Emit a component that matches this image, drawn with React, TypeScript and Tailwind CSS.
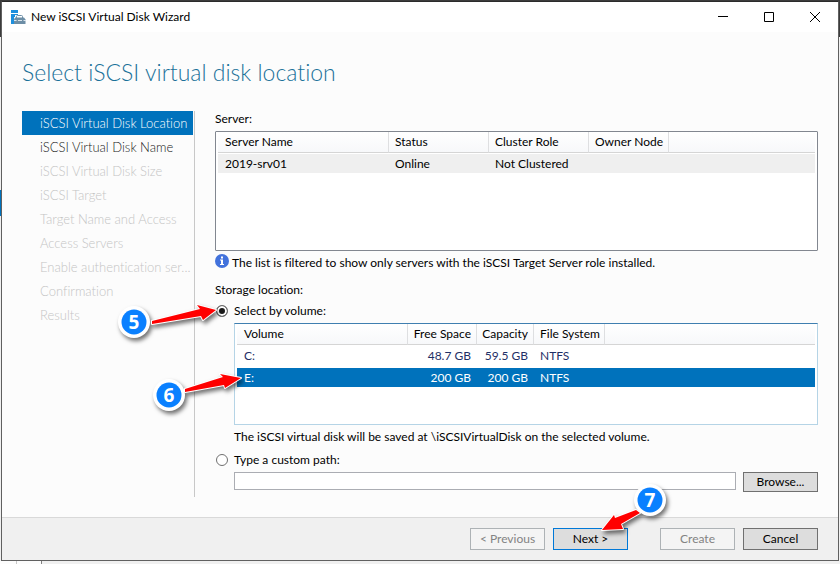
import type { ReactNode } from "react";

const steps = [
  "iSCSI Virtual Disk Location",
  "iSCSI Virtual Disk Name",
  "iSCSI Virtual Disk Size",
  "iSCSI Target",
  "Target Name and Access",
  "Access Servers",
  "Enable authentication ser...",
  "Confirmation",
  "Results",
];

function stepClass(i: number) {
  if (i === 0) return "bg-[#0072bc] text-white";
  if (i === 1) return "text-[#222222]";
  return "text-[#c4c4c4]";
}

/* Numbered marker with an arrow; its origin is the arrow's tip. */
function Callout({ n, cx, cy, points, className }: { n: number; cx: number; cy: number; points: string; className: string }) {
  return (
    <svg className={`pointer-events-none absolute z-10 size-px overflow-visible ${className}`} aria-hidden="true">
      <g className="drop-shadow-[2px_3px_2px_rgba(0,0,0,0.55)]">
        <polygon points={points} fill="#ff0000" stroke="#ffffff" strokeWidth="2" strokeLinejoin="round" paintOrder="stroke" />
        <circle cx={cx} cy={cy} r="16" fill="#ffffff" />
      </g>
      <circle cx={cx} cy={cy} r="12.5" fill="#0a80ff" />
      <text x={cx} y={cy + 7} textAnchor="middle" fill="#ffffff" className="font-['Open_Sans',sans-serif] text-[19px] font-bold">
        {n}
      </text>
    </svg>
  );
}

function Th({ children, className = "px-1.5" }: { children?: ReactNode; className?: string }) {
  return (
    <th
      scope="col"
      className={`h-[21px] border-b border-b-[#d5d5d5] bg-linear-to-b from-white to-[#f7f8fa] py-0 font-normal whitespace-nowrap ${className}`}
    >
      {children}
    </th>
  );
}

const cell = "h-[22px] border-t border-b-2 border-transparent bg-clip-padding py-0 whitespace-nowrap";
const divider = "border-r border-r-[#dedfe1]";
const button = "h-[22px] w-[75px] border text-center";
const enabled = "border-[#707070] bg-[#dddddd] text-black";
const disabled = "border-[#adb2b5] bg-[#f4f4f4] text-[#838383]";
const radio =
  "size-3 shrink-0 appearance-none rounded-full border border-[#707070] bg-white checked:bg-[#1a1a1a] checked:shadow-[inset_0_0_0_2px_#ffffff]";

function TitleBar() {
  return (
    <header className="flex h-[30px] shrink-0 items-center bg-white pl-[9px]">
      <svg width="15" height="15" viewBox="0 0 15 15" aria-hidden="true">
        <path d="M0 0h7v3H0zM0 4h7v1H4v2H3v7H0z" fill="#1e8fdd" />
        <path d="M5.500 8V6.500Q5.500 5.500 6.500 5.500h4Q11.500 5.500 11.500 6.500V8" fill="none" stroke="#6d8ea6" />
        <path d="M4 7.500h9l1.500 2V14H3V9.500z" fill="#6d8ea6" />
        <path d="M3 10.500h2.500M7 10.500h4M12.500 10.500H15" stroke="#dce6ed" />
      </svg>
      <h1 className="ml-[5px] flex-1">New iSCSI Virtual Disk Wizard</h1>
      <button type="button" aria-label="Minimize" className="flex h-full w-[46px] items-center justify-center">
        <svg width="10" height="10" stroke="#000">
          <path d="M0 4.500h10" />
        </svg>
      </button>
      <button type="button" aria-label="Maximize" className="flex h-full w-[46px] items-center justify-center">
        <svg width="10" height="10" stroke="#000" fill="none">
          <path d="M.5.5h9v9h-9z" />
        </svg>
      </button>
      <button type="button" aria-label="Close" className="flex h-full w-[46px] items-center justify-center">
        <svg width="10" height="10" stroke="#000">
          <path d="M0 0l10 10M10 0L0 10" />
        </svg>
      </button>
    </header>
  );
}

function ServerTable() {
  return (
    <div className="h-[120px] rounded-[1px] border border-[#828790] bg-white px-[2px]">
      <table className="w-full table-fixed border-separate border-spacing-0 text-left" aria-labelledby="server-label">
        <colgroup>
          <col className="w-[171px]" />
          <col className="w-[100px]" />
          <col className="w-[100px]" />
          <col className="w-[80px]" />
          <col />
        </colgroup>
        <thead>
          <tr>
            {["Server Name", "Status", "Cluster Role", "Owner Node"].map((h, i) => (
              <Th key={h} className={i === 0 ? `${divider} pl-[7px]` : `${divider} pl-1.5`}>
                {h}
              </Th>
            ))}
            <Th />
          </tr>
        </thead>
        <tbody>
          <tr>
            {["2019-srv01", "Online", "Not Clustered", "", ""].map((v, i) => (
              <td key={i} className={i === 0 ? `${cell} bg-[#efefef] pl-[7px]` : `${cell} bg-[#efefef] pl-1.5`}>
                {v}
              </td>
            ))}
          </tr>
        </tbody>
      </table>
    </div>
  );
}

const volumes = [
  { name: "C:", free: "48.7 GB", cap: "59.5 GB", fs: "NTFS", row: "text-[#1f2f66]", fill: "" },
  { name: "E:", free: "200 GB", cap: "200 GB", fs: "NTFS", row: "text-white", fill: "bg-[#0072bc]" },
];

function VolumeTable() {
  return (
    <div className="relative h-[102px] border border-[#b5d4e6] border-t-[#3f7fb0] bg-white px-[2px]">
      <table className="w-full table-fixed border-separate border-spacing-0 text-left" aria-label="Volumes">
        <colgroup>
          <col className="w-[171px]" />
          <col className="w-[69px]" />
          <col className="w-[57px]" />
          <col className="w-[71px]" />
          <col />
        </colgroup>
        <thead>
          <tr>
            <Th className={`${divider} pl-[7px]`}>Volume</Th>
            <Th className={`${divider} pr-[5px] text-right`}>Free Space</Th>
            <Th className={`${divider} pr-[5px] text-right`}>Capacity</Th>
            <Th className={`${divider} pl-1.5`}>File System</Th>
            <Th />
          </tr>
        </thead>
        <tbody>
          {volumes.map((v) => (
            <tr key={v.name} className={v.row}>
              <td className={`${cell} ${v.fill} pl-[7px]`}>{v.name}</td>
              <td className={`${cell} ${v.fill} pr-1.5 text-right`}>{v.free}</td>
              <td className={`${cell} ${v.fill} pr-1.5 text-right`}>{v.cap}</td>
              <td className={`${cell} ${v.fill} pl-1.5`}>{v.fs}</td>
              <td className={`${cell} ${v.fill}`} />
            </tr>
          ))}
        </tbody>
      </table>
      <Callout
        n={6}
        cx={-72}
        cy={17}
        points="0,0 -21,-4 -18,-1 -56,11 -56,14 -17,7 -16,10"
        className="top-[54px] left-[6px]"
      />
    </div>
  );
}

export default function App() {
  return (
    <div className="flex h-screen min-h-[564px] flex-col bg-[#f0f0f0] font-['Lato','Open_Sans',sans-serif] text-[12px] leading-4 text-black [font-variant-ligatures:none]">
      <div className="h-px shrink-0 bg-[#3c3c3c]" />
      <div className="flex min-h-0 flex-1">
        <div className="flex w-px flex-col">
          <div className="h-9 bg-[#3c3c3c]" />
          <div className="h-[153px]" />
          <div className="h-[26px] bg-[#0072bc]" />
        </div>
        <div className="flex min-w-0 flex-1 flex-col border border-[#606060] border-t-[#2b2b2b] bg-[#fcfcfc]">
          <TitleBar />
          <h2 className="pt-6 pl-5 text-[23px] leading-8 font-light text-[#1a7199]">Select iSCSI virtual disk location</h2>
          <main className="flex flex-1 pt-[23px] pr-5 pb-5 pl-5">
            <nav className="w-[173px] shrink-0 border-r border-[#c8c8c8] pr-px text-[13px] font-light" aria-label="Wizard steps">
              <ol>
                {steps.map((s, i) => (
                  <li key={s} className={`h-6 pl-[18px] leading-6 whitespace-nowrap ${stepClass(i)}`}>
                    {s}
                  </li>
                ))}
              </ol>
            </nav>
            <section className="ml-5 min-w-0 flex-1">
              <h3 id="server-label" className="mb-1">
                Server:
              </h3>
              <ServerTable />
              <p className="flex h-6 items-center gap-[3px]">
                <svg width="14" height="14" viewBox="0 0 14 14" className="-mt-1 shrink-0" aria-hidden="true">
                  <circle cx="7" cy="7" r="7" fill="#4272dc" />
                  <path d="M6 2.500h2v2H6zM5 5.500h3V10h1v1H5v-1h1V6.500H5z" fill="#fff" />
                </svg>
                The list is filtered to show only servers with the iSCSI Target Server role installed.
              </p>
              <h3 className="mt-[7px]">Storage location:</h3>
              <div className="relative mt-[5px] mb-1 flex h-4 items-center">
                <label className="flex items-center gap-[6px] pl-px">
                  <input type="radio" name="location" defaultChecked className={radio} />
                  Select by volume:
                </label>
                <Callout
                  n={5}
                  cx={-82}
                  cy={12}
                  points="0,0 -19,-5 -16,-1 -64,11 -64,14 -15,6 -13,10"
                  className="top-[7px] left-[1px]"
                />
              </div>
              <div className="pl-[19px]">
                <VolumeTable />
                <p className="mt-1">The iSCSI virtual disk will be saved at \iSCSIVirtualDisk on the selected volume.</p>
              </div>
              <label className="mt-[7px] flex items-center gap-[6px] pl-px">
                <input type="radio" name="location" className={radio} />
                Type a custom path:
              </label>
              <div className="mt-1 flex gap-[7px] pl-[19px]">
                <input type="text" aria-label="Custom path" className="h-[18px] min-w-0 flex-1 border border-[#abadb3] bg-white px-1" />
                <button type="button" className="h-5 w-[75px] border border-[#707070] bg-[#dddddd]">
                  Browse...
                </button>
              </div>
            </section>
          </main>
          <footer className="flex h-[43px] shrink-0 items-center justify-end gap-2 border-t border-[#d9d9d9] bg-[#f0f0f0] pr-5">
            <button type="button" disabled className={`${button} ${disabled}`}>
              &lt; Previous
            </button>
            <div className="relative">
              <button type="button" className={`${button} border-[#0078d7] bg-[#dddddd] text-black`}>
                Next &gt;
              </button>
              <Callout
                n={7}
                cx={48}
                cy={-30}
                points="0,0 12,-15 13,-12 34,-20 38,-17 19,-6 21,-1"
                className="top-[2px] left-[49px]"
              />
            </div>
            <button type="button" disabled className={`${button} ml-6 ${disabled}`}>
              Create
            </button>
            <button type="button" className={`${button} ${enabled}`}>
              Cancel
            </button>
          </footer>
        </div>
        <div className="flex w-px flex-col">
          <div className="h-9 bg-[#3c3c3c]" />
        </div>
      </div>
      <div className="flex h-[3px] shrink-0">
        <div className="w-[17px] border-r border-[#c8c8c8] bg-[#fcfcfc]" />
        <div className="w-[25px] border-r border-[#808080] bg-[#fcfcfc]" />
      </div>
    </div>
  );
}
